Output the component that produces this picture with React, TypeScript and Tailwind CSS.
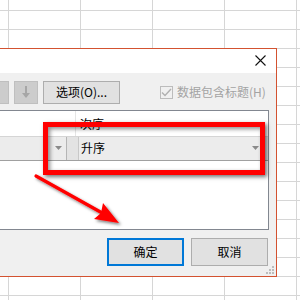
import React from 'react';

function DownArrow() {
  return (
    <svg width="10" height="14" viewBox="0 0 10 14">
      <path d="M5 1 V11" stroke="#a6a6a6" strokeWidth="2" />
      <path d="M1 8 L5 13 L9 8 Z" fill="#a6a6a6" />
    </svg>
  );
}

function Caret() {
  return (
    <svg width="7" height="4" viewBox="0 0 7 4">
      <path d="M0 0 H7 L3.5 4 Z" fill="#8a8a8a" />
    </svg>
  );
}

function SizeGrip() {
  return (
    <svg width="8" height="8" viewBox="0 0 8 8">
      <rect x="6" y="0" width="2" height="2" fill="#bdbdbd" />
      <rect x="3" y="3" width="2" height="2" fill="#bdbdbd" />
      <rect x="6" y="3" width="2" height="2" fill="#bdbdbd" />
      <rect x="0" y="6" width="2" height="2" fill="#bdbdbd" />
      <rect x="3" y="6" width="2" height="2" fill="#bdbdbd" />
      <rect x="6" y="6" width="2" height="2" fill="#bdbdbd" />
    </svg>
  );
}

export default function App() {
  return (
    <div className="relative w-[300px] h-[300px] overflow-hidden bg-white font-['Noto_Sans_CJK_SC','Noto_Sans',sans-serif] text-[12px] text-black bg-[linear-gradient(to_right,#d6d6d6_1px,transparent_1px),linear-gradient(to_bottom,#d6d6d6_1px,transparent_1px)] [background-size:72px_19px] [background-position:8px_10px]">
      {/* sort dialog */}
      <div className="absolute top-[48px] left-[-1px] w-[278px] h-[229px] border border-[#d35230] bg-[#f0f0f0] flex flex-col">
        <div className="h-[24px] bg-white flex items-center justify-end pr-[10px]">
          <svg width="11" height="11" viewBox="0 0 11 11">
            <path d="M0.5 0.5 L10.5 10.5 M10.5 0.5 L0.5 10.5" stroke="#111" strokeWidth="1.1" />
          </svg>
        </div>

        <div className="mt-[8px] h-[23px] flex items-center">
          <div className="ml-[-12px] w-[21px] h-[23px] bg-[#cccccc] border border-[#bfbfbf]" />
          <div className="ml-[5px] w-[24px] h-[23px] bg-[#cccccc] border border-[#bfbfbf] flex items-center justify-center">
            <DownArrow />
          </div>
          <div className="ml-[5px] w-[77px] h-[23px] bg-[#e1e1e1] border border-[#adadad] flex items-center justify-center leading-none">
            选项(O)...
          </div>
          <div className="ml-[40px] flex items-center gap-[4px] text-[#a3a3a3]">
            <div className="w-[13px] h-[13px] border border-[#bcbcbc] bg-[#f0f0f0] flex items-center justify-center">
              <svg width="11" height="9" viewBox="0 0 11 9">
                <path d="M1 4.5 L4 7.5 L10 1" stroke="#b0b0b0" strokeWidth="1.4" fill="none" />
              </svg>
            </div>
            <span className="leading-none">数据包含标题(H)</span>
          </div>
        </div>

        <div className="mt-[6px] ml-[-1px] w-[270px] h-[123px] border border-[#828790] bg-white flex flex-col">
          <div className="h-[26px] flex border-b border-[#d5d5d5]">
            <div className="w-[76px] border-r border-[#e5e5e5]" />
            <div className="flex-1 flex items-center pl-[4px] pt-[2px]">次序</div>
          </div>
          <div className="h-[24px] flex bg-[#e3e3e3] border-b border-[#a0a0a0]">
            <div className="w-[67px] bg-[#ececec] border-r border-[#b5b5b5] flex items-center justify-end pr-[4px]">
              <Caret />
            </div>
            <div className="w-[11px]" />
            <div className="flex-1 mr-[5px] bg-[#ececec] border-l border-r border-[#c8c8c8] flex items-center justify-between pl-[2px] pr-[3px]">
              <span>升序</span>
              <Caret />
            </div>
          </div>
        </div>

        <div className="mt-[8px] flex items-center">
          <div className="ml-[107px] w-[77px] h-[28px] bg-[#e1e1e1] border-2 border-[#0078d7] flex items-center justify-center">
            确定
          </div>
          <div className="ml-[7px] w-[77px] h-[28px] bg-[#e1e1e1] border border-[#adadad] flex items-center justify-center">
            取消
          </div>
        </div>
        <div className="mt-auto mb-[2px] mr-[2px] flex justify-end">
          <SizeGrip />
        </div>
      </div>

      {/* red highlight box */}
      <div className="absolute left-[43px] top-[122px] w-[222px] h-[53px] border-[5px] border-[#ff0000] shadow-[2px_2px_4px_rgba(0,0,0,0.55),inset_2px_2px_4px_rgba(0,0,0,0.45)]" />

      {/* red arrow */}
      <svg className="absolute left-0 top-0" width="300" height="300" viewBox="0 0 300 300">
        <defs>
          <filter id="sh" x="-20%" y="-20%" width="140%" height="140%">
            <feDropShadow dx="2" dy="2" stdDeviation="1.5" floodColor="#000" floodOpacity="0.5" />
          </filter>
        </defs>
        <g filter="url(#sh)">
          <path d="M36 176 L104 214" stroke="#ff0000" strokeWidth="3.2" strokeLinecap="round" />
          <path d="M119 223 L94 219 L101 213 L103 203 Z" fill="#ff0000" />
        </g>
      </svg>
    </div>
  );
}
